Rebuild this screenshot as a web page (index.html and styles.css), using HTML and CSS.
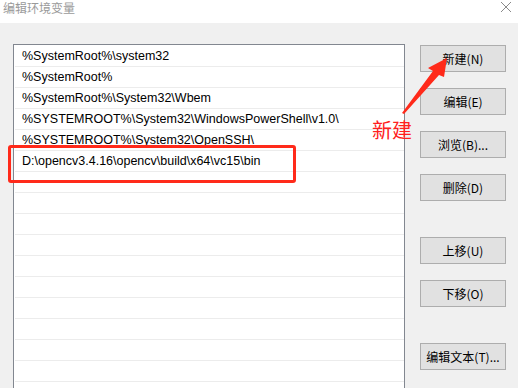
FILE: index.html
```html
<!DOCTYPE html>
<html lang="zh-CN">
<head>
<meta charset="utf-8">
<title>编辑环境变量</title>
<link rel="stylesheet" href="styles.css">
</head>
<body>
<div class="window">
  <div class="titlebar">
    <span class="title">编辑环境变量</span>
    <svg class="close" width="12" height="12" viewBox="0 0 12 12"><path d="M1 1 L11 11 M11 1 L1 11" stroke="#8a8a8a" stroke-width="1" fill="none"/></svg>
  </div>
  <div class="content">
    <div class="list">
      <div class="row">%SystemRoot%\system32</div>
      <div class="row">%SystemRoot%</div>
      <div class="row">%SystemRoot%\System32\Wbem</div>
      <div class="row">%SYSTEMROOT%\System32\WindowsPowerShell\v1.0\</div>
      <div class="row">%SYSTEMROOT%\System32\OpenSSH\</div>
      <div class="row">D:\opencv3.4.16\opencv\build\x64\vc15\bin</div>
      <div class="row"></div>
      <div class="row"></div>
      <div class="row"></div>
      <div class="row"></div>
      <div class="row"></div>
      <div class="row"></div>
      <div class="row"></div>
      <div class="row"></div>
      <div class="row"></div>
      <div class="row"></div>
    </div>
    <div class="buttons">
      <div class="btn">新建(N)</div>
      <div class="btn">编辑(E)</div>
      <div class="btn">浏览(B)...</div>
      <div class="btn">删除(D)</div>
      <div class="btn group">上移(U)</div>
      <div class="btn">下移(O)</div>
      <div class="btn group">编辑文本(T)...</div>
    </div>
  </div>
  <div class="highlight"></div>
  <div class="note">新建</div>
  <svg class="arrow" width="518" height="388" viewBox="0 0 518 388">
    <polygon points="402,113 433,71 428,68 447,58 444,77 439,75 404,114" fill="#ff2a1a"/>
  </svg>
</div>
</body>
</html>
```

FILE: styles.css
```css
* { box-sizing: border-box; }
html, body {
  margin: 0;
  padding: 0;
  width: 518px;
  height: 388px;
  overflow: hidden;
  background: #f0f0f0;
}
.window {
  position: relative;
  width: 518px;
  height: 388px;
  overflow: hidden;
  font-family: "Liberation Sans", "Noto Sans CJK SC", sans-serif;
  font-size: 12px;
  color: #000;
}
.titlebar {
  height: 23px;
  background: #fff;
  display: flex;
  align-items: flex-start;
  justify-content: space-between;
  padding: 0 6px 0 3px;
}
.title {
  font-family: "Noto Sans CJK SC", sans-serif;
  font-size: 12px;
  line-height: 16px;
  color: #9a9a9a;
}
.close {
  margin-top: 1px;
}
.content {
  display: flex;
  align-items: flex-start;
  padding: 21px 0 0 13px;
}
.list {
  width: 392px;
  height: 400px;
  border: 1px solid #828790;
  background: #fff;
  padding-top: 1px;
}
.row {
  height: 21px;
  line-height: 20px;
  border-bottom: 1px solid #ececec;
  margin-left: 1px;
  padding-left: 7px;
  font-size: 12.5px;
  white-space: nowrap;
  overflow: hidden;
}
.buttons {
  display: flex;
  flex-direction: column;
  margin-left: 15px;
  margin-top: 1px;
}
.btn {
  width: 86px;
  height: 27px;
  margin-bottom: 16px;
  border: 1px solid #adadad;
  background: #e1e1e1;
  display: flex;
  align-items: center;
  justify-content: center;
  font-family: "Noto Sans CJK SC", sans-serif;
  font-size: 12px;
  white-space: nowrap;
}
.btn.group {
  margin-top: 20px;
}
.highlight {
  position: absolute;
  left: 8px;
  top: 145px;
  width: 288px;
  height: 38px;
  border: 3px solid #ff2a1a;
  border-radius: 3px;
}
.note {
  position: absolute;
  left: 372px;
  top: 118px;
  font-family: "Noto Sans CJK SC", sans-serif;
  font-size: 20px;
  line-height: 24px;
  color: #ff2020;
}
.arrow {
  position: absolute;
  left: 0;
  top: 0;
  pointer-events: none;
}
```
